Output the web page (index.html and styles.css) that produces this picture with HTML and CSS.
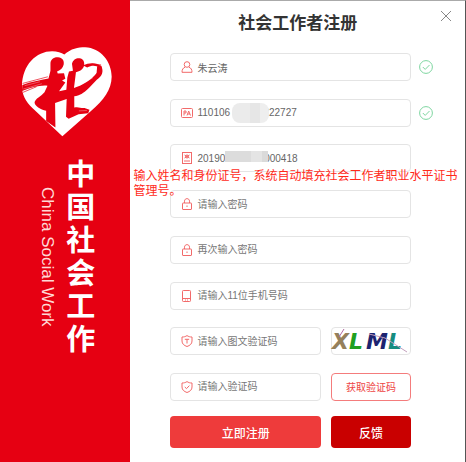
FILE: index.html
```html
<!DOCTYPE html>
<html lang="zh-CN">
<head>
<meta charset="utf-8">
<meta name="viewport" content="width=device-width, initial-scale=1">
<title>社会工作者注册</title>
<link rel="stylesheet" href="styles.css">
</head>
<body>
<div class="dialog">
  <aside class="brand">
    <svg class="brand-logo" viewBox="65 47 272 272" aria-hidden="true">
      <path fill="#fff" d="M187 317 L98 233 C74 211 65 190 65 165 C66 101 108 60 156 60 C172 60 184 64 193 70 C213 52 234 48 256 48 C302 50 336 91 336 137 C335 177 314 205 271 243 Z"/>
      <g fill="#e60012">
        <path d="M151 98 C151 84 161 77 174 78 C187 79 193 88 191 100 C189 110 182 117 171 121 L173 127 L192 126 L196 143 L186 148 L196 154 L177 181 L199 176 L202 139 L207 121 L219 119 L216 98 C219 85 229 80 239 81 C250 83 254 91 253 102 C250 115 240 120 228 123 L226 140 L222 171 C249 162 274 147 292 124 L299 111 C288 101 275 103 262 109 L250 103 C270 92 292 96 305 105 C312 121 308 134 291 146 L268 170 C250 188 239 193 223 196 L223 230 C235 226 244 233 254 231 L269 237 L265 247 L236 250 L206 264 L198 258 L200 204 L165 216 L166 290 L138 271 L138 240 C121 236 103 225 103 215 C104 204 124 195 133 184 L142 164 C117 162 94 169 65 180 L66 162 C92 151 119 148 145 142 L151 119 Z"/>
        <path d="M292 106 L304 103 L307 116 L290 132 Z"/>
      </g>
      <path fill="none" stroke="#fff" stroke-width="1" d="M73 164 L119 152 M69 174 L125 158 M235 164 L279 140 M237 240 L261 239"/>
      <path fill="none" stroke="#e60012" stroke-width="2" d="M67 157 L143 137 M68 184 L109 167 M276 98 L304 101"/>
    </svg>
    <div class="brand-name">
      <span class="brand-en">China Social Work</span>
      <span class="brand-cn">中国社会工作</span>
    </div>
  </aside>

  <main class="panel">
    <button class="close" type="button" aria-label="关闭">
      <svg viewBox="0 0 12 12"><path d="M1 1 L11 11 M11 1 L1 11"/></svg>
    </button>
    <h1 class="title">社会工作者注册</h1>

    <form class="form">
      <div class="rows">
        <div class="row">
          <label class="field">
            <svg class="icon" viewBox="0 0 12 12"><circle cx="6" cy="3.5" r="2.8"/><path d="M4 6.2 C2 7 1 8.5 1 11.3 H11 C11 8.5 10 7 8 6.2"/></svg>
            <input type="text" aria-label="姓名" value="朱云涛">
          </label>
          <svg class="ok" viewBox="0 0 14 14"><circle cx="7" cy="7" r="6.4"/><path d="M3.8 7 L6.2 9.4 L10.5 5"/></svg>
        </div>

        <div class="row">
          <label class="field">
            <svg class="icon" viewBox="0 0 12 12"><rect x=".5" y="1.5" width="11" height="9" rx="1"/><path d="M3 8.5 V4 H5 V6 H3 M6 8.5 L7.7 4 L9.5 8.5 M6.5 7 H9"/></svg>
            <input type="text" aria-label="身份证号" value="110106&nbsp;&nbsp;&nbsp;&nbsp;&nbsp;&nbsp;&nbsp;&nbsp;&nbsp;&nbsp;&nbsp;&nbsp;222727">
            <span class="mask mask-round"></span>
          </label>
          <svg class="ok" viewBox="0 0 14 14"><circle cx="7" cy="7" r="6.4"/><path d="M3.8 7 L6.2 9.4 L10.5 5"/></svg>
        </div>

        <div class="row">
          <label class="field">
            <svg class="icon" viewBox="0 0 12 12"><rect x="1.5" y=".5" width="9" height="11"/><circle cx="6" cy="4.5" r="1.5"/><path d="M3.5 3 L8.500 6 M8.500 3 L3.500 6 M3 9 H9"/></svg>
            <input type="text" aria-label="管理号" value="20190&nbsp;&nbsp;&nbsp;&nbsp;&nbsp;&nbsp;&nbsp;&nbsp;&nbsp;&nbsp;&nbsp;&nbsp;&nbsp;&nbsp;000418">
            <span class="mask mask-square"></span>
          </label>
          <p class="note">输入姓名和身份证号，系统自动填充社会工作者职业水平证书管理号。</p>
        </div>

        <div class="row">
          <label class="field">
            <svg class="icon" viewBox="0 0 12 12"><rect x="1.5" y="5" width="9" height="6.5" rx=".5"/><path d="M3.5 5 V3.2 C3.5 -.2 8.5 -.2 8.5 3.2 V5 M6 7.5 V9"/></svg>
            <input type="password" aria-label="密码" placeholder="请输入密码">
          </label>
        </div>

        <div class="row">
          <label class="field">
            <svg class="icon" viewBox="0 0 12 12"><rect x="1.5" y="5" width="9" height="6.5" rx=".5"/><path d="M3.5 5 V3.2 C3.5 -.2 8.5 -.2 8.5 3.2 V5 M6 7.5 V9"/></svg>
            <input type="password" aria-label="确认密码" placeholder="再次输入密码">
          </label>
        </div>

        <div class="row">
          <label class="field">
            <svg class="icon" viewBox="0 0 12 12"><rect x="1.5" y=".5" width="8" height="11" rx=".8"/><path d="M1.500 8.500 H9.500 M4 10 H5 M6 10 H7"/></svg>
            <input type="tel" aria-label="手机号码" placeholder="请输入11位手机号码">
          </label>
        </div>

        <div class="row">
          <label class="field">
            <svg class="icon" viewBox="0 0 12 12"><path d="M6 .6 C7.5 1.6 9 2 11 2 V6 C11 8.8 9 10.5 6 11.5 C3 10.5 1 8.8 1 6 V2 C3 2 4.5 1.6 6 .6 Z M3.8 4.3 H8.2 M6 4.3 V8.5"/></svg>
            <input type="text" aria-label="图文验证码" placeholder="请输入图文验证码">
          </label>
          <button class="captcha" type="button" aria-label="换一张验证码">
            <svg viewBox="0 0 78 26">
              <text x="0" y="21" fill="#95805b">X</text>
              <text x="17" y="21" fill="#20a020">L</text>
              <text x="34" y="21" fill="#1c2370">M</text>
              <text x="56" y="21" fill="#168c80">L</text>
              <path d="M12 1 L7 9" stroke="#b06aa0"/>
              <path d="M37 6 L53 10 L75 24" stroke="#c3a0bd"/>
            </svg>
          </button>
        </div>

        <div class="row">
          <label class="field">
            <svg class="icon" viewBox="0 0 12 12"><path d="M6 .6 C7.5 1.6 9 2 11 2 V6 C11 8.8 9 10.5 6 11.5 C3 10.5 1 8.8 1 6 V2 C3 2 4.5 1.6 6 .6 Z M3.8 6 L5.5 7.6 L8.4 4.6"/></svg>
            <input type="text" aria-label="验证码" placeholder="请输入验证码">
          </label>
          <button class="get-code" type="button">获取验证码</button>
        </div>
      </div>

      <div class="actions">
        <button class="btn btn-primary" type="submit">立即注册</button>
        <button class="btn btn-feedback" type="button">反馈</button>
      </div>
    </form>
  </main>
</div>
</body>
</html>
```
FILE: styles.css
```css
* {
  box-sizing: border-box;
}

body {
  margin: 0;
  font-family: "Liberation Sans", "Noto Sans CJK SC", sans-serif;
  color: #666;
  background: #fff;
}

button,
input {
  font: inherit;
}

button {
  padding: 0;
  cursor: pointer;
}

.dialog {
  display: grid;
  grid-template-columns: 28% minmax(0, 1fr);
  min-height: 100vh;
}

.brand {
  display: flex;
  flex-direction: column;
  align-items: center;
  padding: 47px 0 0 4px;
  background: #e60012;
  color: #fff;
}

.brand-logo {
  width: 90px;
  height: 90px;
}

.brand-name {
  display: flex;
  gap: 10px;
  margin-top: 22px;
}

.brand-en {
  margin-top: 28px;
  writing-mode: vertical-rl;
  font-size: 17px;
  line-height: 18px;
  color: #ffd9d6;
}

.brand-cn {
  width: 30px;
  font-size: 29px;
  font-weight: 700;
  line-height: 33px;
  word-break: break-all;
}

.panel {
  position: relative;
  display: flex;
  flex-direction: column;
  padding: 10px 54px 14px 40px;
  border-top: 1px solid #aaa;
  border-right: 1px solid #555;
}

.title {
  margin: 0 -14px 16px 0;
  font-size: 17px;
  line-height: 26px;
  text-align: center;
  color: #333;
}

.close {
  position: absolute;
  top: 9px;
  right: 13px;
  width: 12px;
  height: 12px;
  border: 0;
  background: none;
}

.close svg {
  display: block;
  fill: none;
  stroke: #888;
}

.form {
  display: flex;
  flex: 1;
  flex-direction: column;
  gap: 15px;
}

.rows {
  display: flex;
  flex: 1;
  flex-direction: column;
  justify-content: space-between;
}

.row {
  position: relative;
  display: flex;
  gap: 10px;
}

.field {
  position: relative;
  display: flex;
  flex: 1;
  align-items: center;
  gap: 4px;
  min-width: 0;
  height: 28px;
  padding: 0 10px;
  border: 1px solid #e4e4e4;
  border-radius: 4px;
}

.field input {
  flex: 1;
  min-width: 0;
  padding: 0;
  border: 0;
  outline: 0;
  background: none;
  font-size: 10px;
  color: #666;
}

.field input::placeholder {
  color: #777;
  opacity: 1;
}

.icon {
  flex: none;
  width: 12px;
  height: 12px;
  fill: none;
  stroke: #f26a6a;
}

.mask {
  position: absolute;
  background: linear-gradient(90deg, #ebebeb 50%, #e6e6e6 50% 75%, #eee 75%);
}

.mask-round {
  top: 3px;
  left: 61px;
  width: 37px;
  height: 20px;
  border-radius: 8px;
}

.mask-square {
  top: 6px;
  left: 54px;
  width: 43px;
  height: 11px;
  background: linear-gradient(90deg, #dcdcdc 60%, #e4e4e4 60% 85%, #dadada 85%);
}

.ok {
  position: absolute;
  top: 7px;
  left: 100%;
  width: 14px;
  height: 14px;
  margin-left: 8px;
  fill: none;
  stroke: #7ed6a0;
}

.note {
  position: absolute;
  z-index: 1;
  top: 25px;
  left: -37px;
  width: 330px;
  margin: 0;
  font-size: 12px;
  line-height: 15px;
  color: #ff2a1a;
}

.captcha,
.get-code {
  width: 80px;
  height: 28px;
  border: 1px solid #e4e4e4;
  border-radius: 4px;
  background: #fff;
}

.captcha svg {
  display: block;
  overflow: visible;
  fill: none;
  font-family: "DejaVu Sans", sans-serif;
  font-size: 22px;
  font-style: italic;
  font-weight: 700;
}

.get-code {
  border-color: #f47c7c;
  font-size: 10px;
  color: #ee4444;
}

.actions {
  display: flex;
  gap: 10px;
}

.btn {
  height: 32px;
  border: 0;
  border-radius: 4px;
  font-size: 12px;
  font-weight: 500;
  color: #fff;
}

.btn-primary {
  flex: 1;
  background: #ee3b3b;
}

.btn-feedback {
  width: 80px;
  background: #c90000;
}
```
